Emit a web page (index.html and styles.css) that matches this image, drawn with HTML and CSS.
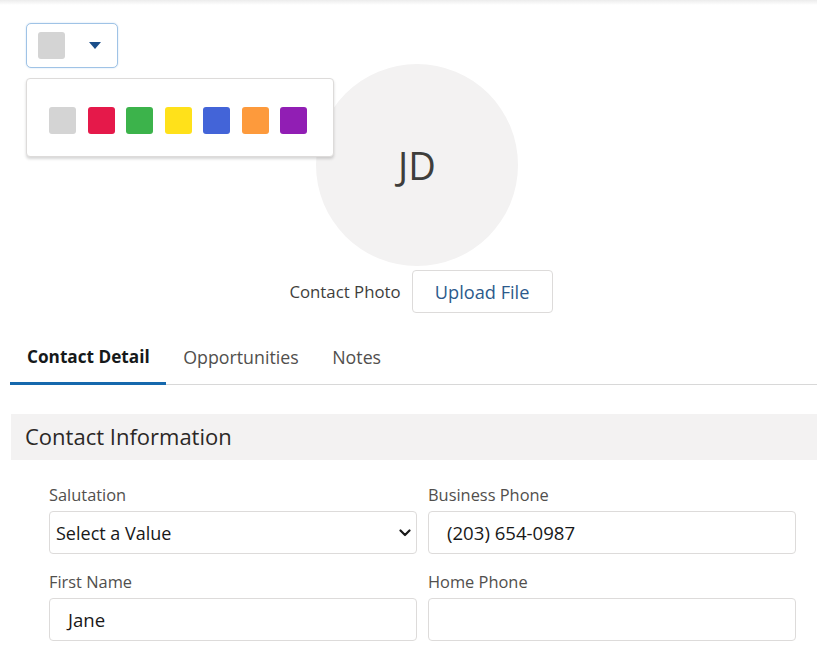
FILE: index.html
```html
<!DOCTYPE html>
<html lang="en">
<head>
    <meta charset="UTF-8">
    <meta name="viewport" content="width=device-width, initial-scale=1.0">
    <title>Contact</title>
    <link rel="stylesheet" href="styles.css">
</head>
<body>
    <div class="top-shadow"></div>
    <div class="page">
        <div class="photo-section">
            <div class="color-picker">
                <button class="picker-btn">
                    <span class="swatch swatch-current"></span>
                    <svg class="caret" width="12" height="8" viewBox="0 0 12 8"><path d="M0 0 L12 0 L6 7 Z" fill="#1b4f8a"/></svg>
                </button>
                <div class="picker-menu">
                    <span class="swatch" style="background:#d4d4d4"></span>
                    <span class="swatch" style="background:#e5194a"></span>
                    <span class="swatch" style="background:#3cb34b"></span>
                    <span class="swatch" style="background:#ffe11a"></span>
                    <span class="swatch" style="background:#4364d8"></span>
                    <span class="swatch" style="background:#fd9a3c"></span>
                    <span class="swatch" style="background:#911eb4"></span>
                </div>
            </div>

            <div class="avatar">JD</div>

            <div class="photo-row">
                <span class="photo-label">Contact Photo</span>
                <button class="upload-btn">Upload File</button>
            </div>
        </div>

        <div class="tabs">
            <div class="tab active">Contact Detail</div>
            <div class="tab">Opportunities</div>
            <div class="tab">Notes</div>
        </div>

        <div class="section-header">Contact Information</div>

        <div class="form-grid">
            <div class="field">
                <label>Salutation</label>
                <div class="input select">
                    <span>Select a Value</span>
                    <svg width="12" height="8" viewBox="0 0 12 8"><path d="M1.5 1.5 L6 6 L10.5 1.5" fill="none" stroke="#1a1a1a" stroke-width="2.2" stroke-linecap="round" stroke-linejoin="round"/></svg>
                </div>
            </div>
            <div class="field">
                <label>Business Phone</label>
                <div class="input">(203) 654-0987</div>
            </div>
            <div class="field">
                <label>First Name</label>
                <div class="input">Jane</div>
            </div>
            <div class="field">
                <label>Home Phone</label>
                <div class="input"></div>
            </div>
        </div>
    </div>
</body>
</html>
```

FILE: styles.css
```css
body {
    margin: 0;
    background: #fff;
    font-family: "Open Sans", "Noto Sans", sans-serif;
    color: #3e3e3c;
    overflow: hidden;
}

.top-shadow {
    height: 5px;
    background: linear-gradient(#ececec, #fff);
}

.page {
    width: 812px;
    margin-left: 10px;
}

.photo-section {
    position: relative;
    padding-top: 59px;
}

.color-picker {
    position: absolute;
    left: 16px;
    top: 18px;
    z-index: 2;
}

.picker-btn {
    width: 92px;
    height: 45px;
    border: 1px solid #9fc3e6;
    border-radius: 5px;
    background: #fff;
    display: flex;
    align-items: center;
    padding: 0 0 0 11px;
    box-shadow: 0 0 2px #c9def2;
}

.caret {
    margin-left: 24px;
    margin-top: 1px;
}

.swatch {
    display: inline-block;
    width: 27px;
    height: 27px;
    border-radius: 3px;
}

.swatch-current {
    background: #d4d4d4;
}

.picker-menu {
    margin-top: 10px;
    width: 308px;
    height: 79px;
    border: 1px solid #dddbda;
    border-radius: 4px;
    background: #fff;
    box-shadow: 0 2px 3px rgba(0, 0, 0, 0.16);
    display: flex;
    align-items: center;
    gap: 11.5px;
    padding: 6px 0 0 22px;
    box-sizing: border-box;
}

.avatar {
    width: 202px;
    height: 202px;
    border-radius: 50%;
    background: #f3f2f2;
    margin-left: 306px;
    display: flex;
    align-items: center;
    justify-content: center;
    font-size: 38px;
    color: #3e3e3c;
}

.photo-row {
    display: flex;
    align-items: center;
    justify-content: center;
    gap: 11px;
    margin-top: 4px;
    padding-left: 10px;
}

.photo-label {
    font-size: 16.8px;
    color: #3e3e3c;
}

.upload-btn {
    width: 141px;
    height: 43px;
    border: 1px solid #dddbda;
    border-radius: 4px;
    background: #fff;
    font-family: inherit;
    font-size: 18.2px;
    color: #2d5a8c;
}

.tabs {
    display: flex;
    margin-top: 19px;
    border-bottom: 1px solid #d8d8d8;
}

.tab {
    padding: 0 16.5px 0 17px;
    height: 50px;
    line-height: 50px;
    font-size: 17.8px;
    color: #514f4d;
    border-bottom: 3px solid transparent;
    margin-bottom: -1px;
}

.tab.active {
    font-weight: 700;
    font-size: 17.2px;
    color: #16191a;
    border-bottom-color: #1568ad;
}

.section-header {
    margin: 29px 0 0 1px;
    height: 46px;
    line-height: 45px;
    background: #f3f2f2;
    padding-left: 14px;
    font-size: 22px;
    color: #2b2826;
}

.form-grid {
    display: grid;
    grid-template-columns: 368px 368px;
    column-gap: 11px;
    row-gap: 16px;
    margin: 23px 0 0 39px;
}

.field label {
    display: block;
    font-size: 16.4px;
    color: #514f4d;
    line-height: 24px;
    margin-bottom: 4px;
}

.input {
    height: 43px;
    border: 1px solid #dddbda;
    border-radius: 4px;
    box-sizing: border-box;
    display: flex;
    align-items: center;
    padding-left: 18px;
    font-size: 18.6px;
    color: #181818;
}

.input.select {
    padding: 0 5px 0 6px;
    justify-content: space-between;
    font-size: 18px;
}
```
